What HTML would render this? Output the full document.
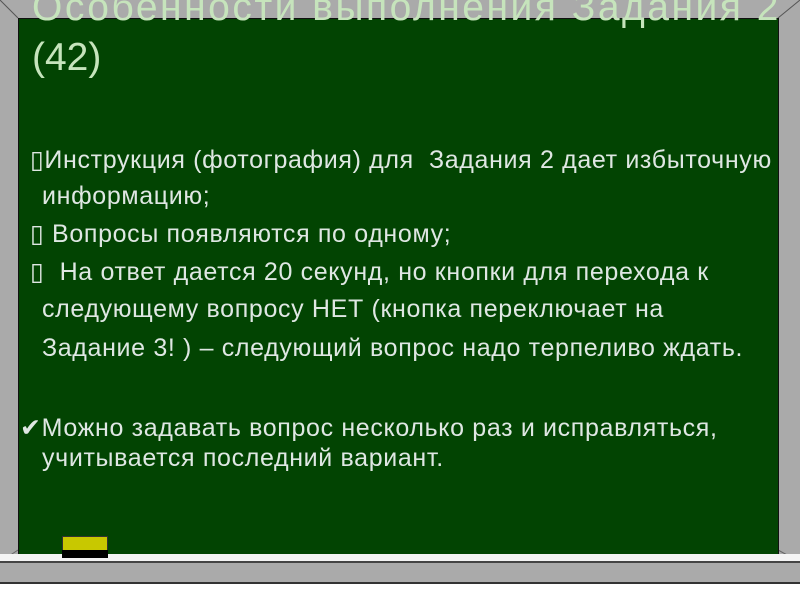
<!DOCTYPE html>
<html><head><meta charset="utf-8"><style>
body{margin:0;width:800px;height:600px;overflow:hidden;background:#fff;position:relative;font-family:"Liberation Sans",sans-serif}
.frame{position:absolute;left:0;top:0;width:800px;height:582px;background:#aaaaaa;border-bottom:2px solid #333}
.board{position:absolute;left:18px;top:18px;width:759px;height:535px;background:#024402;border:1px solid #111}
.ledge{position:absolute;left:0;top:554px;width:800px;height:7px;background:#f4f4f4;border-bottom:2px solid #444}
.t{position:absolute;color:#c6e4bc;font-size:39px;white-space:nowrap}
.b{position:absolute;color:#dfe7e3;font-size:25px;letter-spacing:0.65px;white-space:nowrap}
</style></head><body>
<div class="frame"></div>
<svg style="position:absolute;left:0;top:0" width="800" height="600"><line x1="0" y1="0" x2="18" y2="18" stroke="#555" stroke-width="1"/><line x1="800" y1="0" x2="778" y2="18" stroke="#555"/><line x1="0" y1="562" x2="18" y2="550" stroke="#666"/><line x1="800" y1="562" x2="778" y2="550" stroke="#666"/></svg>
<div class="board"></div>
<div class="ledge"></div>
<div style="position:absolute;left:62px;top:536px;width:44px;height:14px;background:#c8c800;border:1px solid #333"></div>
<div style="position:absolute;left:62px;top:550px;width:46px;height:8px;background:#000"></div>
<div class="t" style="left:32px;top:-14px;letter-spacing:2.5px">Особенности выполнения Задания 2</div>
<div class="t" style="left:32px;top:36px">(42)</div>
<div class="b" style="left:30px;top:145px">▯Инструкция (фотография) для&nbsp; Задания 2 дает избыточную</div>
<div class="b" style="left:42px;top:182px">информацию;</div>
<div class="b" style="left:30px;top:219px">▯ Вопросы появляются по одному;</div>
<div class="b" style="left:30px;top:257px">▯&nbsp; На ответ дается 20 секунд, но кнопки для перехода к</div>
<div class="b" style="left:42px;top:295px">следующему вопросу НЕТ (кнопка переключает на</div>
<div class="b" style="left:42px;top:334px">Задание 3! ) – следующий вопрос надо терпеливо ждать.</div>
<div class="b" style="left:20px;top:413px">✔Можно задавать вопрос несколько раз и исправляться,</div>
<div class="b" style="left:42px;top:444px">учитывается последний вариант.</div>
</body></html>
